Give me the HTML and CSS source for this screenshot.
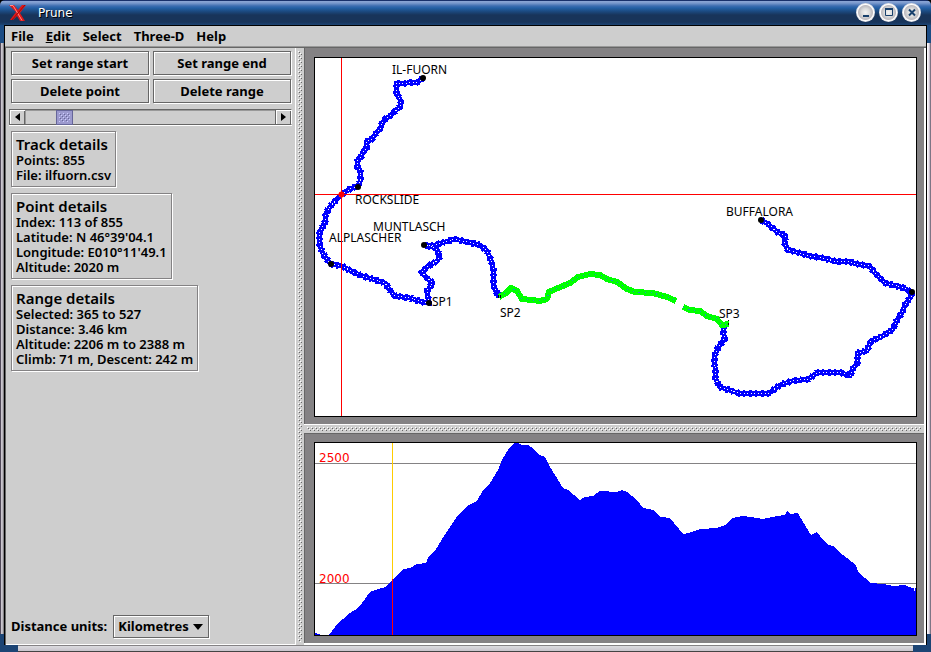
FILE: index.html
```html
<!DOCTYPE html>
<html lang="en">
<head>
<meta charset="utf-8">
<title>Prune</title>
<link rel="stylesheet" href="styles.css">
</head>
<body>
<div class="window">
  <header class="titlebar">
    <svg class="logo" width="18" height="18" viewBox="0 0 18 18" aria-hidden="true">
      <path d="M0 1h5l4 5 4-5h4l-6 8 5 8h-5l-3-5-4 4H1l6-8z" fill="#e01818"/>
      <path d="M1 1.500h3l9 15" fill="none" stroke="#ff8a8a"/>
      <path d="M16 1l-7 8-6 7" fill="none" stroke="#a00808"/>
    </svg>
    <h1 class="title">Prune</h1>
    <div class="window-controls">
      <button class="control" aria-label="Minimize"><svg width="19" height="19" viewBox="0 0 19 19"><path d="M7 12h6v2H7z" fill="#18406c"/></svg></button>
      <button class="control" aria-label="Maximize"><svg width="19" height="19" viewBox="0 0 19 19"><path d="M6.500 6v6.500h7V6M6 6h8" fill="none" stroke="#18406c"/><path d="M6 5h8v2H6z" fill="#18406c"/></svg></button>
      <button class="control" aria-label="Close"><svg width="19" height="19" viewBox="0 0 19 19"><path d="M7 6.500l6 6m0-6l-6 6" fill="none" stroke="#18406c" stroke-width="2"/></svg></button>
    </div>
  </header>
  <div class="frame">
    <div class="client">
      <nav class="menubar">
        <button class="menu">File</button>
        <button class="menu"><u>E</u>dit</button>
        <button class="menu">Select</button>
        <button class="menu">Three-D</button>
        <button class="menu">Help</button>
      </nav>
      <main class="split">
        <aside class="details">
          <div class="actions">
            <button class="action">Set range start</button>
            <button class="action">Set range end</button>
            <button class="action">Delete point</button>
            <button class="action">Delete range</button>
          </div>
          <div class="scroller">
            <button class="arrow" aria-label="Previous point"><svg width="5" height="8" viewBox="0 0 5 8"><path d="M5 0v8L0 4z"/></svg></button>
            <input class="slider" type="range" min="0" max="855" value="113" aria-label="Point index">
            <button class="arrow" aria-label="Next point"><svg width="5" height="8" viewBox="0 0 5 8"><path d="M0 0v8l5-4z"/></svg></button>
          </div>
          <section class="info">
            <h2>Track details</h2>
            <p>Points: 855</p>
            <p>File: ilfuorn.csv</p>
          </section>
          <section class="info">
            <h2>Point details</h2>
            <p>Index: 113 of 855</p>
            <p>Latitude: N 46°39'04.1</p>
            <p>Longitude: E010°11'49.1</p>
            <p>Altitude: 2020 m</p>
          </section>
          <section class="info">
            <h2>Range details</h2>
            <p>Selected: 365 to 527</p>
            <p>Distance: 3.46 km</p>
            <p>Altitude: 2206 m to 2388 m</p>
            <p>Climb: 71 m, Descent: 242 m</p>
          </section>
          <div class="units">
            <label for="units">Distance units:</label>
            <span class="combo">
              <select id="units"><option>Kilometres</option><option>Miles</option></select>
              <svg width="10" height="6" viewBox="0 0 10 6" aria-hidden="true"><path d="M0 0h10L5 6z"/></svg>
            </span>
          </div>
        </aside>
        <div class="divider divider-v"></div>
        <div class="charts">
          <div class="pane pane-map">
            <div class="canvas">
              <svg class="plot" viewBox="315 58 601 358" role="img" aria-label="Track map">
                <defs>
                  <path id="track-a" d="M423 78L418 82 407 83 396 83 396 89 396 94 399 97 401 102 400 107 394 112 390 116 385 119 382 123 381 128 376 133 372 139 366 142 367 148 363 152 361 157 358 159 357 166 360 170 361 175 360 182 357 186 350 189 342 194 336 200 330 207 326 213 325 222 320 232 319 242 322 252 326 258 331 264 342 266 351 271 360 275 372 279 385 283 389 289 395 296 410 298 422 302 429 303 428 297 427 291 433 283 427 278 422 272 427 267 437 261 440 256 436 248 425 245 435 245 445 242 455 239 467 242 480 245 487 251 491 260 493 268 493 285 499 297"/>
                  <path id="track-b" d="M724 326L723 332 725 338 718 348 714 357 715 367 715 378 720 387 738 393 750 393 769 393 780 385 792 381 808 379 817 373 828 372 842 373 850 376 852 370 858 362 857 353 867 351 871 341 883 336 893 329 897 320 902 313 906 303 911 297 911 292 904 288 885 283 875 273 869 266 857 264 847 261 838 262 823 258 810 256 800 253 788 250 784 242 786 236 777 232 768 224 761 220"/>
                  <path id="range" d="M499 297L506 293 511 288 517 291 522 299 532 300 540 301 547 299 549 292 558 288 570 283 578 277 590 274 600 275 607 279 617 282 627 289 635 292 653 293 667 297 676 301M683 307L690 310 700 311 707 316 717 319 722 325 729 324"/>
                </defs>
                <g class="track"><use href="#track-a"/><use href="#track-b"/></g>
                <g class="track-edge"><use href="#track-a"/><use href="#track-b"/></g>
                <g class="track-points"><use href="#track-a"/><use href="#track-b"/></g>
                <use class="range" href="#range"/>
                <use class="range-points" href="#range"/>
                <g>
                  <circle cx="423" cy="78" r="3"/><circle cx="358" cy="187" r="3"/><circle cx="331" cy="264" r="3"/><circle cx="424" cy="245" r="3"/><circle cx="429" cy="303" r="3"/><circle cx="761" cy="220" r="3"/><circle cx="912" cy="292" r="3"/>
                  <path d="M498 295h1v3h-1zM500 295h1v3h-1zM728 320h1v1h-1zM728 323h1v2h-1z"/>
                </g>
                <g class="labels">
                  <text x="392" y="74">IL-FUORN</text>
                  <text x="355" y="204">ROCKSLIDE</text>
                  <text x="373" y="231">MUNTLASCH</text>
                  <text x="329" y="242">ALPLASCHER</text>
                  <text x="432" y="306">SP1</text>
                  <text x="500" y="317">SP2</text>
                  <text x="719" y="318">SP3</text>
                  <text x="726" y="216">BUFFALORA</text>
                </g>
                <path class="crosshair" d="M341.500 58v358M315 194.500h601"/>
                <circle class="cursor" cx="341.500" cy="194.500" r="2"/>
              </svg>
            </div>
          </div>
          <div class="divider divider-h"></div>
          <div class="pane pane-profile">
            <div class="canvas">
              <svg class="plot" viewBox="315 443 601 192" preserveAspectRatio="none" shape-rendering="crispEdges" role="img" aria-label="Altitude profile">
                <path d="M315 463.500h601M315 583.500h601" class="rule"/>
                <path fill="#00f" d="M315 633L322 635H329L335 627 340 621 345 618 348 614 355 610 362 603 370 592 378 589 386 587 392 580 397 575 403 569 410 568 417 564 426 563 429 556 435 551 442 539 450 527 458 515 467 506 477 501 482 492 490 483 498 470 502 460 508 450 513 444 516 442 522 445 528 445 533 448 538 454 545 457 550 467 555 475 563 488 568 490 580 500 585 497 593 496 600 491 617 492 622 490 627 492 637 500 643 508 653 510 661 517 670 518 683 534 688 533 700 529 717 528 725 525 732 518 743 516 757 518 763 519 777 516 785 515 787 511 790 514 798 513 803 522 811 535 817 532 823 540 828 545 833 546 843 555 856 565 858 572 871 583 883 584 893 586 905 585 912 588 914 588 914 591 915 591 915 588 916 588V635H315z"/>
                <path d="M392.500 443v137" class="marker-sky"/>
                <path d="M392.500 579v56" class="marker-ground"/>
              </svg>
              <span class="level level-high">2500</span>
              <span class="level level-low">2000</span>
            </div>
          </div>
        </div>
      </main>
    </div>
  </div>
</div>
</body>
</html>
```
FILE: styles.css
```css
* { box-sizing: border-box; }

:root {
  --bumps: url("data:image/svg+xml,%3Csvg xmlns='http://www.w3.org/2000/svg' width='4' height='4' shape-rendering='crispEdges'%3E%3Cpath d='M0 0h1v1H0zM2 2h1v1H2z' fill='%23fff'/%3E%3Cpath d='M1 1h1v1H1zM3 3h1v1H3z' fill='%23666'/%3E%3C/svg%3E");
  --bumps-blue: url("data:image/svg+xml,%3Csvg xmlns='http://www.w3.org/2000/svg' width='4' height='4' shape-rendering='crispEdges'%3E%3Cpath d='M0 0h1v1H0zM2 2h1v1H2z' fill='%23ccf'/%3E%3Cpath d='M1 1h1v1H1zM3 3h1v1H3z' fill='%23669'/%3E%3C/svg%3E");
}

body {
  margin: 0;
  background: #000;
  color: #000;
  font: 700 13px/15px "Noto Sans", "Open Sans", sans-serif;
}

h1, h2, p { margin: 0; }

button, select {
  font: inherit;
  color: inherit;
  margin: 0;
  padding: 0;
  border: 0;
  background: none;
}

.window {
  display: flex;
  flex-direction: column;
  min-height: 100vh;
}

/* Title bar */
.titlebar {
  display: flex;
  align-items: center;
  height: 25px;
  padding: 0 10px 0 9px;
  border-radius: 5px 5px 0 0;
  background: linear-gradient(#18306b 0, #18306b 1px, #8ca6d6 1px, #7b9ace 3px, #3c6cb0 6px, #2460a5 8px, #1c4c84 11px, #18345a 15px, #18345a 22px, #1c4474 25px);
}

.title {
  flex: 1;
  padding-left: 11px;
  color: #fff;
  font: 400 12px/16px "DejaVu Sans", sans-serif;
  text-shadow: 1px 1px 0 #000;
}

.window-controls { display: flex; gap: 4px; }

.control {
  display: grid;
  place-items: center;
  width: 19px;
  height: 19px;
  border-radius: 50%;
  background: radial-gradient(circle, #f4f4f4 0, #dcdcdc 4px, #c4c4c8 6px, #c0bcc0 7px, #fff 8px, #e4e4e8 9px);
}

/* Window frame */
.frame {
  flex: 1;
  display: flex;
  padding: 0 4px 7px;
  background:
    linear-gradient(#1c4c84, #1c4c84) 0 0 / 5px 18px no-repeat,
    linear-gradient(#1c4c84, #1c4c84) 100% 0 / 5px 18px no-repeat,
    linear-gradient(#1c4474, #1c4474) 0 100% / 18px 18px no-repeat,
    linear-gradient(#1c4474, #1c4474) 100% 100% / 18px 18px no-repeat,
    linear-gradient(#848284 0, #848284 1px, #dcdce0 1px, #c8c4cc 6px, #444 6px) 0 100% / 100% 7px no-repeat,
    linear-gradient(90deg, #524a5a 0, #524a5a 1px, #d0ccd4 1px, #b4b0b8 3px, #848284 3px) 0 0 / 4px 100% no-repeat,
    linear-gradient(90deg, #fff 0, #e4dce8 2px, #a8a0b0 3px, #524a5a 4px) 100% 0 / 4px 100% no-repeat;
}

.client {
  flex: 1;
  display: flex;
  flex-direction: column;
  min-width: 0;
  border: 1px solid #000;
  border-bottom: 0;
  background: #cecece;
}

.menubar {
  display: flex;
  gap: 12px;
  height: 21px;
  padding: 0 6px;
  border-bottom: 1px solid #999;
}

/* Split panes */
.split {
  flex: 1;
  display: flex;
  min-height: 0;
  border: solid #666;
  border-width: 1px 0 0 1px;
}

.details {
  flex: none;
  display: flex;
  flex-direction: column;
  align-items: flex-start;
  gap: 6px;
  width: 290px;
  padding: 3px 3px 6px 5px;
  border: solid #fff;
  border-width: 0 1px 1px 0;
}

.divider {
  flex: none;
  background: var(--bumps) content-box, #cecece;
}

.divider-v {
  width: 8px;
  padding: 3px 2px;
}

.divider-h {
  height: 10px;
  padding: 2px 3px;
  border: solid #fff;
  border-width: 1px 0;
  border-bottom-color: #666;
}

.charts {
  flex: 1;
  display: flex;
  flex-direction: column;
  min-width: 0;
  border: solid #fff;
  border-width: 0 2px 2px 0;
}

.pane {
  display: flex;
  min-height: 0;
  padding: 9px 7px 7px 9px;
  border-left: 1px solid #666;
  background: #848284;
}

.pane-map { flex: 376 1 376px; }
.pane-profile { flex: 209 1 209px; padding-top: 8px; }

.canvas {
  position: relative;
  flex: 1;
  border: 1px solid #000;
  background: #fff;
}

.plot {
  position: absolute;
  inset: 0;
  width: 100%;
  height: 100%;
}

/* Buttons */
.actions {
  display: grid;
  grid-template-columns: 1fr 1fr;
  gap: 4px;
  width: 100%;
  padding-right: 1px;
}

.action {
  height: 24px;
  border: 1px solid #666;
  box-shadow: inset 1px 1px #fff, 1px 1px #fff;
}

.scroller {
  display: flex;
  align-self: stretch;
  height: 16px;
  margin-left: -2px;
  border: 1px solid #666;
  border-right-color: #fff;
  box-shadow: 0 1px #fff;
}

.arrow {
  display: grid;
  place-items: center;
  width: 15px;
  box-shadow: inset 1px 1px #fff, inset -1px 0 #666;
}

.slider {
  appearance: none;
  flex: 1;
  min-width: 0;
  margin: 0;
  background: #cecece;
  border-right: 1px solid #666;
  box-shadow: inset 1px 1px #999;
}

.slider::-webkit-slider-thumb {
  appearance: none;
  width: 17px;
  height: 15px;
  padding: 2px;
  border: 1px solid #669;
  background: var(--bumps-blue) content-box, #9c9ace;
}

/* Information boxes */
.info {
  padding: 3px 4px;
  border: 1px solid #848284;
  box-shadow: inset 1px 1px #fff, 1px 1px #fff;
}

.info h2 { font: 600 15px/18px "Noto Sans", "Open Sans", sans-serif; }
.info p { font-weight: 600; }

.units {
  display: flex;
  align-items: center;
  gap: 6px;
  margin-top: auto;
}

.combo {
  display: grid;
  align-items: center;
  border: 1px solid #666;
  box-shadow: inset 1px 1px #fff, 1px 1px #fff;
}

.combo select, .combo svg { grid-area: 1 / 1; }
.combo svg { justify-self: end; margin-right: 5px; pointer-events: none; }

.combo select {
  appearance: none;
  height: 21px;
  padding: 0 19px 0 4px;
}

/* Map */
.track, .track-edge, .track-points, .range, .range-points {
  fill: none;
  stroke-linejoin: round;
  shape-rendering: crispEdges;
}

.track { stroke: #00f; stroke-width: 5px; }
.track-edge { stroke: #00f; stroke-width: 7px; stroke-dasharray: 3 3 2 4; }
.track-points { stroke: #fff; stroke-width: 1px; stroke-dasharray: 1 2 1 3; }
.range { stroke: #0f0; stroke-width: 6px; }
.range-points { stroke: #28c; stroke-width: 1px; stroke-dasharray: 1 5; }
.labels { font: 400 12px "Noto Sans", "Open Sans", sans-serif; }
.crosshair { stroke: #f00; shape-rendering: crispEdges; }
.cursor { fill: none; stroke: #f00; stroke-width: 2px; }

/* Altitude profile */
.rule { stroke: #848284; vector-effect: non-scaling-stroke; }
.marker-sky { stroke: #fc0; vector-effect: non-scaling-stroke; }
.marker-ground { stroke: #f00; vector-effect: non-scaling-stroke; }

.level {
  position: absolute;
  left: 4px;
  color: #f00;
  font: 400 12px/14px "DejaVu Sans", sans-serif;
}

.level-high { top: 4%; }
.level-low { top: 67%; }
```
